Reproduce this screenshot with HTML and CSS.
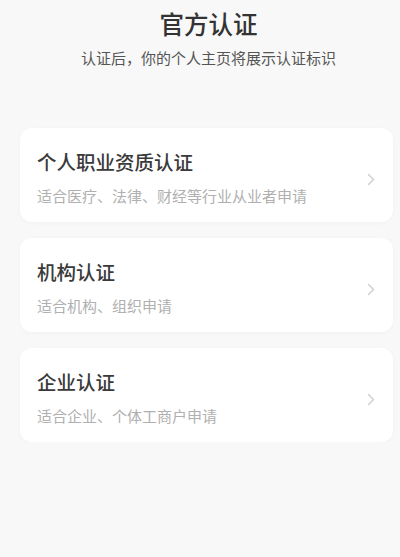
FILE: index.html
```html
<!DOCTYPE html>
<html lang="zh-CN">

<head>
    <meta charset="UTF-8">
    <meta name="viewport" content="width=device-width, initial-scale=1.0">
    <title>官方认证</title>
    <link rel="stylesheet" href="styles.css">
</head>

<body>
    <div class="page">
        <div class="header">
            <h1 class="title">官方认证</h1>
            <p class="subtitle">认证后，你的个人主页将展示认证标识</p>
        </div>

        <div class="list">
            <div class="card">
                <div class="card-text">
                    <div class="card-title">个人职业资质认证</div>
                    <div class="card-desc">适合医疗、法律、财经等行业从业者申请</div>
                </div>
                <svg class="arrow" width="8" height="13" viewBox="0 0 8 13">
                    <polyline points="1.5,1.5 6.5,6.5 1.5,11.5" fill="none" stroke="#d2d2d2" stroke-width="1.6" stroke-linecap="round" stroke-linejoin="round" />
                </svg>
            </div>
            <div class="card">
                <div class="card-text">
                    <div class="card-title">机构认证</div>
                    <div class="card-desc">适合机构、组织申请</div>
                </div>
                <svg class="arrow" width="8" height="13" viewBox="0 0 8 13">
                    <polyline points="1.5,1.5 6.5,6.5 1.5,11.5" fill="none" stroke="#d2d2d2" stroke-width="1.6" stroke-linecap="round" stroke-linejoin="round" />
                </svg>
            </div>
            <div class="card">
                <div class="card-text">
                    <div class="card-title">企业认证</div>
                    <div class="card-desc">适合企业、个体工商户申请</div>
                </div>
                <svg class="arrow" width="8" height="13" viewBox="0 0 8 13">
                    <polyline points="1.5,1.5 6.5,6.5 1.5,11.5" fill="none" stroke="#d2d2d2" stroke-width="1.6" stroke-linecap="round" stroke-linejoin="round" />
                </svg>
            </div>
        </div>
    </div>
</body>

</html>
```

FILE: styles.css
```css
body {
    margin: 0;
    background: #f8f8f8;
    font-family: "Noto Sans CJK SC", "Noto Sans", sans-serif;
    color: #333;
}

.page {
    padding: 8px 7px 0 20px;
}

.header {
    text-align: center;
    padding-left: 4px;
}

.title {
    margin: 0;
    font-size: 24.5px;
    line-height: 32px;
    font-weight: 500;
    color: #333;
}

.subtitle {
    margin: 8px 0 0;
    font-size: 15px;
    line-height: 20px;
    color: #555;
}

.list {
    margin-top: 60px;
    display: flex;
    flex-direction: column;
    gap: 16px;
}

.card {
    display: flex;
    align-items: center;
    background: #fff;
    border-radius: 12px;
    padding: 21px 18px 16px 17px;
    box-shadow: 0 1px 4px rgba(0, 0, 0, 0.03);
}

.card-text {
    flex: 1;
}

.card-title {
    font-size: 19.5px;
    line-height: 26px;
    font-weight: 500;
    color: #3a3a3a;
}

.card-desc {
    margin-top: 11px;
    font-size: 15px;
    line-height: 20px;
    color: #b0b0b0;
}

.arrow {
    margin-top: 4px;
}
```
